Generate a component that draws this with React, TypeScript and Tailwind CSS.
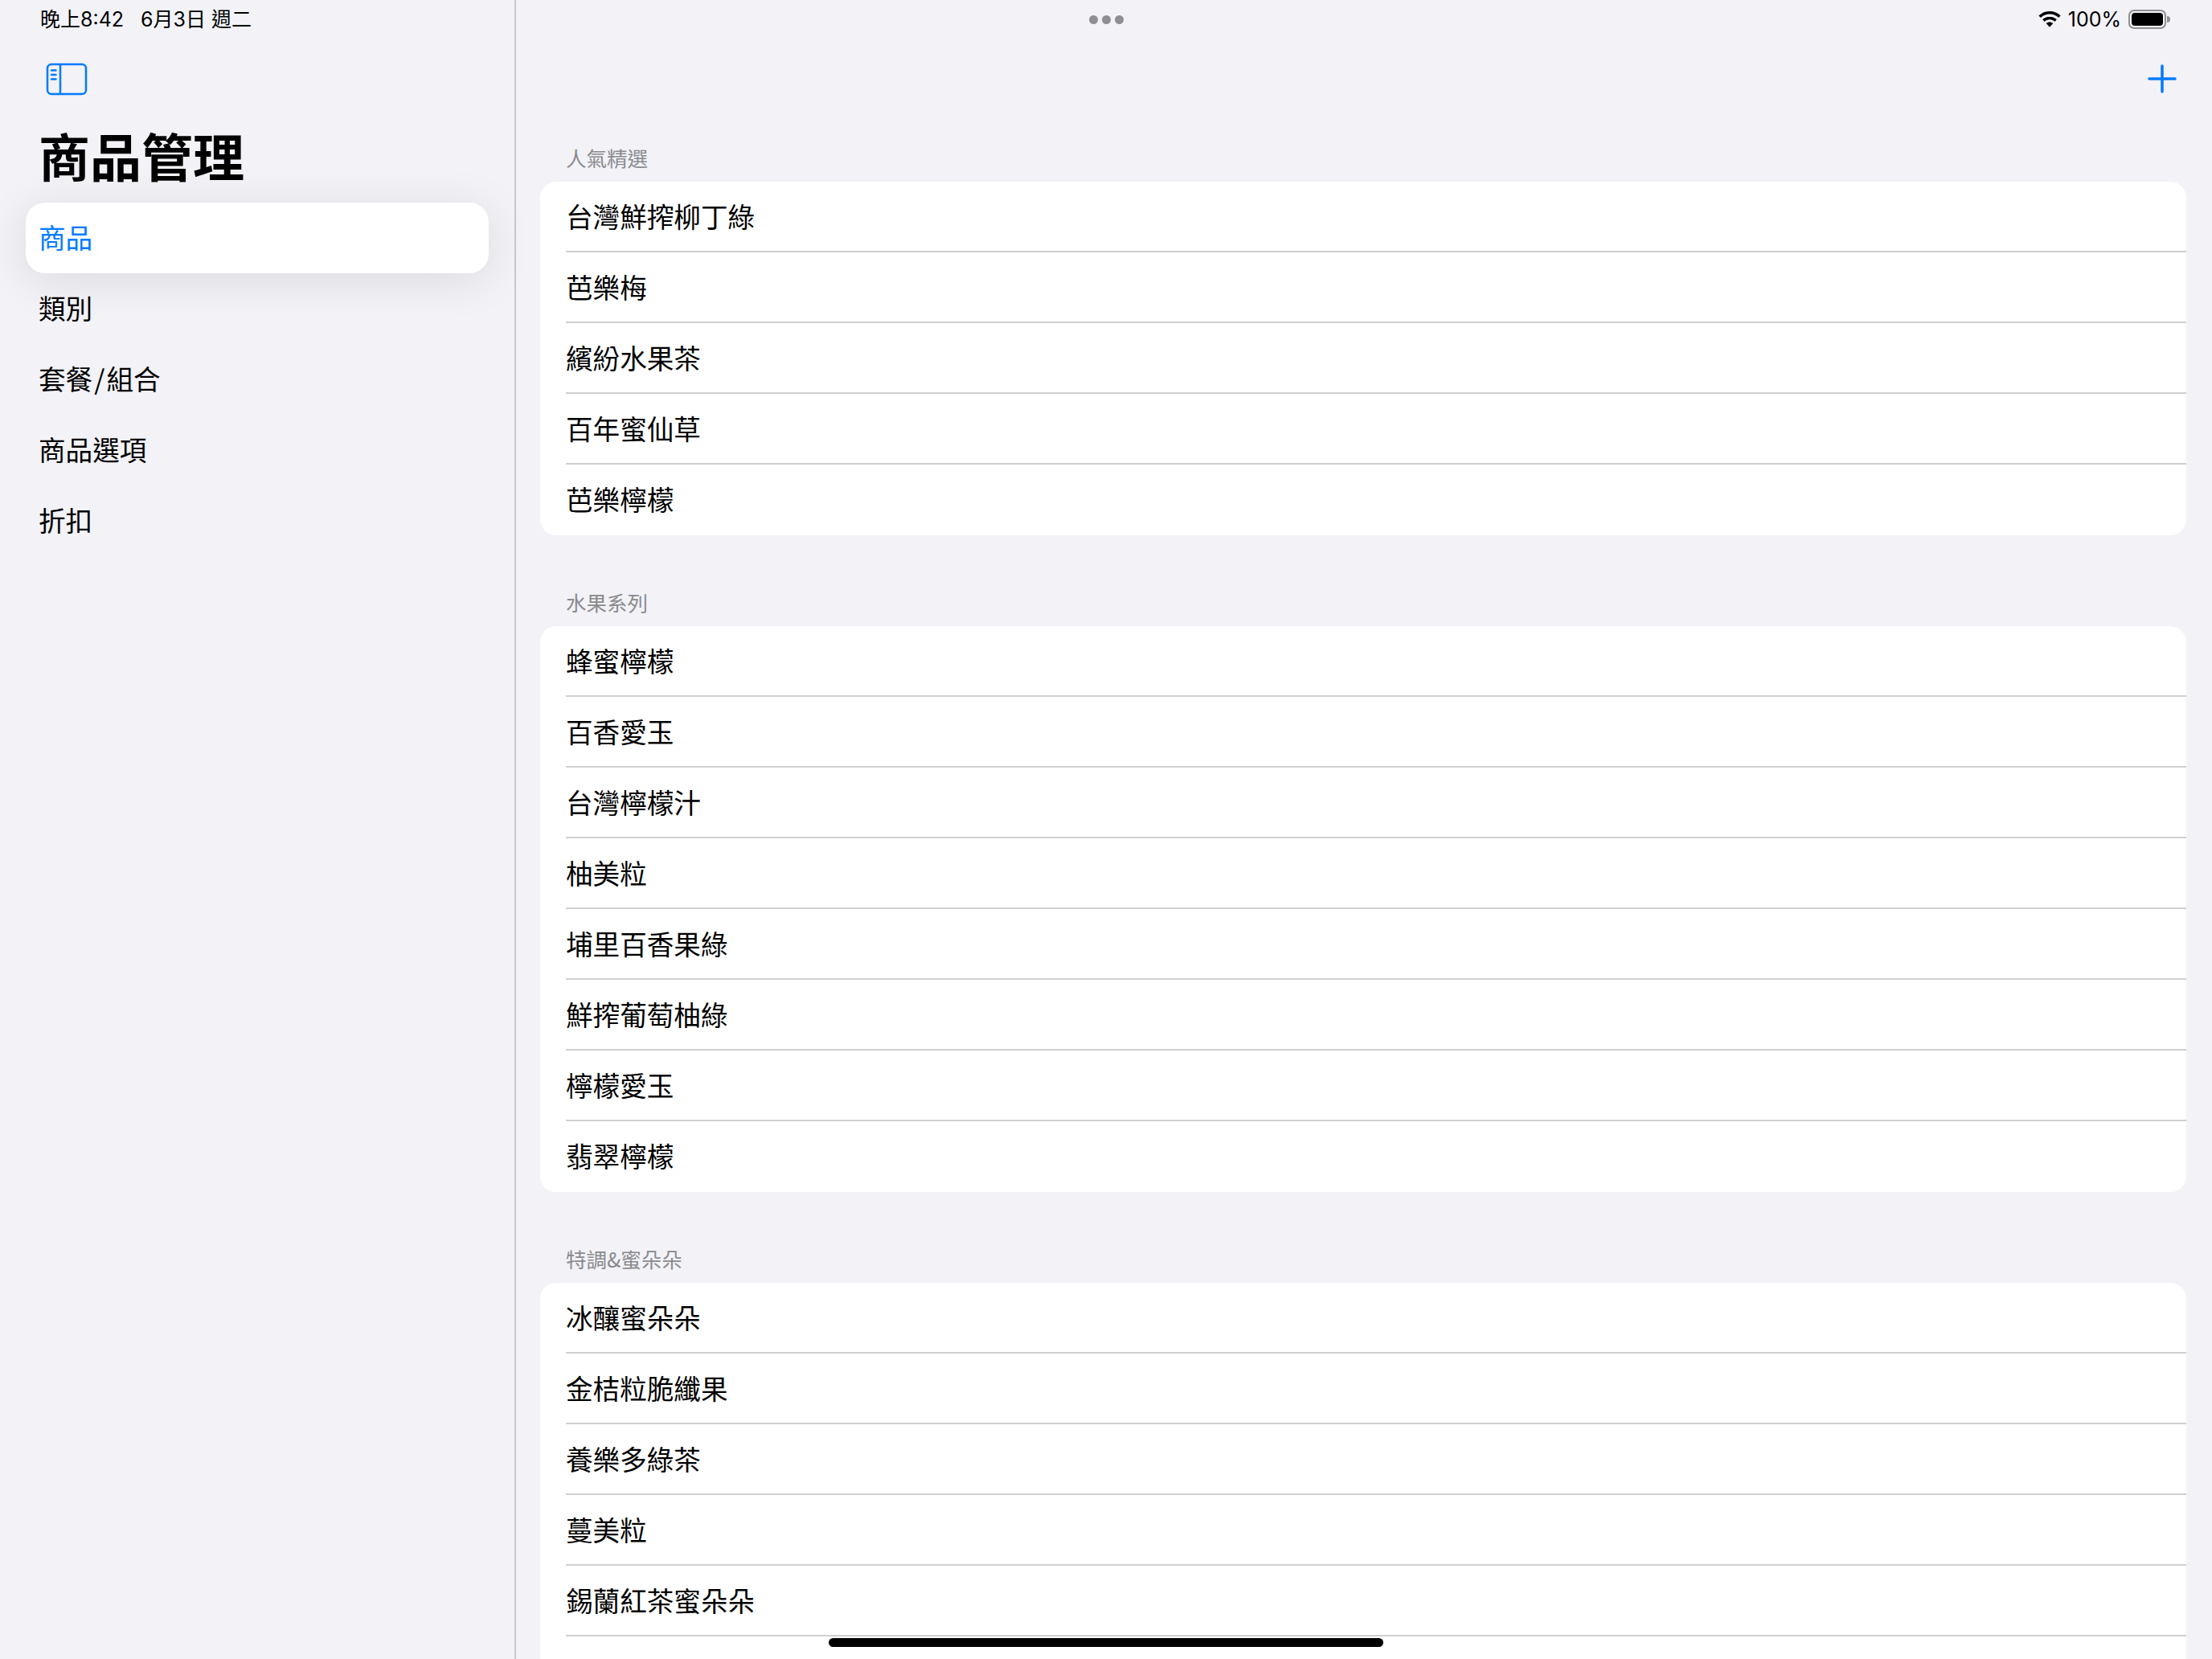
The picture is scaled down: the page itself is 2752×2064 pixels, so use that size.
const sections = [
  { title: '人氣精選', items: ['台灣鮮搾柳丁綠', '芭樂梅', '繽紛水果茶', '百年蜜仙草', '芭樂檸檬'] },
  {
    title: '水果系列',
    items: ['蜂蜜檸檬', '百香愛玉', '台灣檸檬汁', '柚美粒', '埔里百香果綠', '鮮搾葡萄柚綠', '檸檬愛玉', '翡翠檸檬'],
  },
  { title: '特調&蜜朵朵', items: ['冰釀蜜朵朵', '金桔粒脆纖果', '養樂多綠茶', '蔓美粒', '錫蘭紅茶蜜朵朵', ''] },
];

const navItems = ['商品', '類別', '套餐\u200a/\u200a組合', '商品選項', '折扣'];

function SidebarIcon() {
  return (
    <svg width="52" height="41" viewBox="0 0 52 41" fill="none" stroke="#007aff" strokeWidth="2.5">
      <rect x="2" y="2" width="48" height="37" rx="5" />
      <path d="M18 2v37" />
      <path d="M7 9.5h5.5M7 15h5.5M7 20.5h5.5" strokeLinecap="round" />
    </svg>
  );
}

function StatusBar() {
  return (
    <div className="absolute inset-x-0 top-0 flex h-12 items-center justify-between pl-[50px] pr-[52px] font-['Inter','Noto_Sans_CJK_TC',sans-serif] text-black">
      <div className="flex gap-[21px] text-[25px] leading-none">
        <span>晚上8:42</span>
        <span>6月3日 週二</span>
      </div>
      <div className="absolute left-[1355px] top-[19px] flex gap-[5px]">
        <span className="h-[11px] w-[11px] rounded-full bg-[#8e8e93]" />
        <span className="h-[11px] w-[11px] rounded-full bg-[#8e8e93]" />
        <span className="h-[11px] w-[11px] rounded-full bg-[#8e8e93]" />
      </div>
      <div className="flex items-center">
        <svg width="28" height="20" viewBox="0 0 28 20" fill="black">
          <path d="M14 0C8.7 0 4 2 .4 5.4l2.5 2.7C5.8 5.300 9.700 3.600 14 3.600s8.200 1.700 11.100 4.500l2.500-2.700C24 2 19.300 0 14 0z" />
          <path d="M14 6.700c-3.400 0-6.500 1.300-8.800 3.500l2.500 2.700c1.600-1.600 3.800-2.600 6.300-2.600s4.700 1 6.300 2.600l2.500-2.700c-2.300-2.200-5.400-3.500-8.800-3.500z" />
          <path d="M14 13.400c-1.700 0-3.200.7-4.300 1.700L14 19.800l4.300-4.700c-1.100-1-2.600-1.700-4.300-1.700z" />
        </svg>
        <span className="ml-[9px] mr-[9px] text-[25px] leading-none">100%</span>
        <div className="flex items-center">
          <div className="flex h-6 w-[47px] rounded-[7px] border-2 border-[#8e8e93] p-[2px]">
            <div className="flex-1 rounded-[4px] bg-black" />
          </div>
          <div className="ml-[1px] h-[8px] w-[4px] rounded-r-full bg-[#8e8e93]" />
        </div>
      </div>
    </div>
  );
}

export default function App() {
  return (
    <div className="relative flex h-[2064px] w-[2752px] overflow-hidden bg-[#f2f2f7] font-['Noto_Sans_CJK_TC',sans-serif] text-black">
      <aside className="w-[642px] shrink-0 border-r-2 border-[#c9c9cd] pt-[78px]">
        <div className="pl-[57px]">
          <SidebarIcon />
        </div>
        <h1 className="mt-[26px] pl-[48px] text-[64px] leading-[94px] font-bold">商品管理</h1>
        <nav className="mt-[13px] flex flex-col px-8">
          {navItems.map((item, index) => (
            <div
              key={item}
              className={
                index === 0
                  ? 'flex h-[88px] w-[576px] items-center rounded-[24px] bg-white pb-[3px] pl-[16px] text-[33.6px] leading-none text-[#007aff] shadow-[0_8px_56px_rgba(0,0,0,0.1)]'
                  : 'flex h-[88px] w-[576px] items-center pb-[3px] pl-[16px] text-[33.6px] leading-none'
              }
            >
              {item}
            </div>
          ))}
        </nav>
      </aside>

      <main className="flex min-w-0 flex-1 flex-col pl-[30px] pr-8">
        <div className="flex h-[170px] shrink-0 justify-end pr-[12px] pt-[80px]">
          <svg width="36" height="36" viewBox="0 0 36 36" stroke="#007aff" strokeWidth="3.5" strokeLinecap="round">
            <path d="M18 2v32M2 18h32" />
          </svg>
        </div>
        <div className="flex flex-col gap-[57px]">
          {sections.map((section) => (
            <section key={section.title}>
              <h2 className="mb-[3px] flex h-[53px] items-center pl-[32px] text-[25.5px] text-[#8a8a8e]">{section.title}</h2>
              <div className="rounded-[20px] bg-white pl-[32px]">
                {section.items.map((item, index) => (
                  <div
                    key={index}
                    className={
                      index === section.items.length - 1
                        ? 'flex h-[88px] items-center pb-[2px] text-[33.6px]'
                        : 'flex h-[88px] items-center border-b-2 border-[#d0d0d3] text-[33.6px]'
                    }
                  >
                    {item}
                  </div>
                ))}
              </div>
            </section>
          ))}
        </div>
      </main>

      <StatusBar />
      <div className="absolute bottom-[15px] left-[1031px] h-[11px] w-[690px] rounded-full bg-black" />
    </div>
  );
}
